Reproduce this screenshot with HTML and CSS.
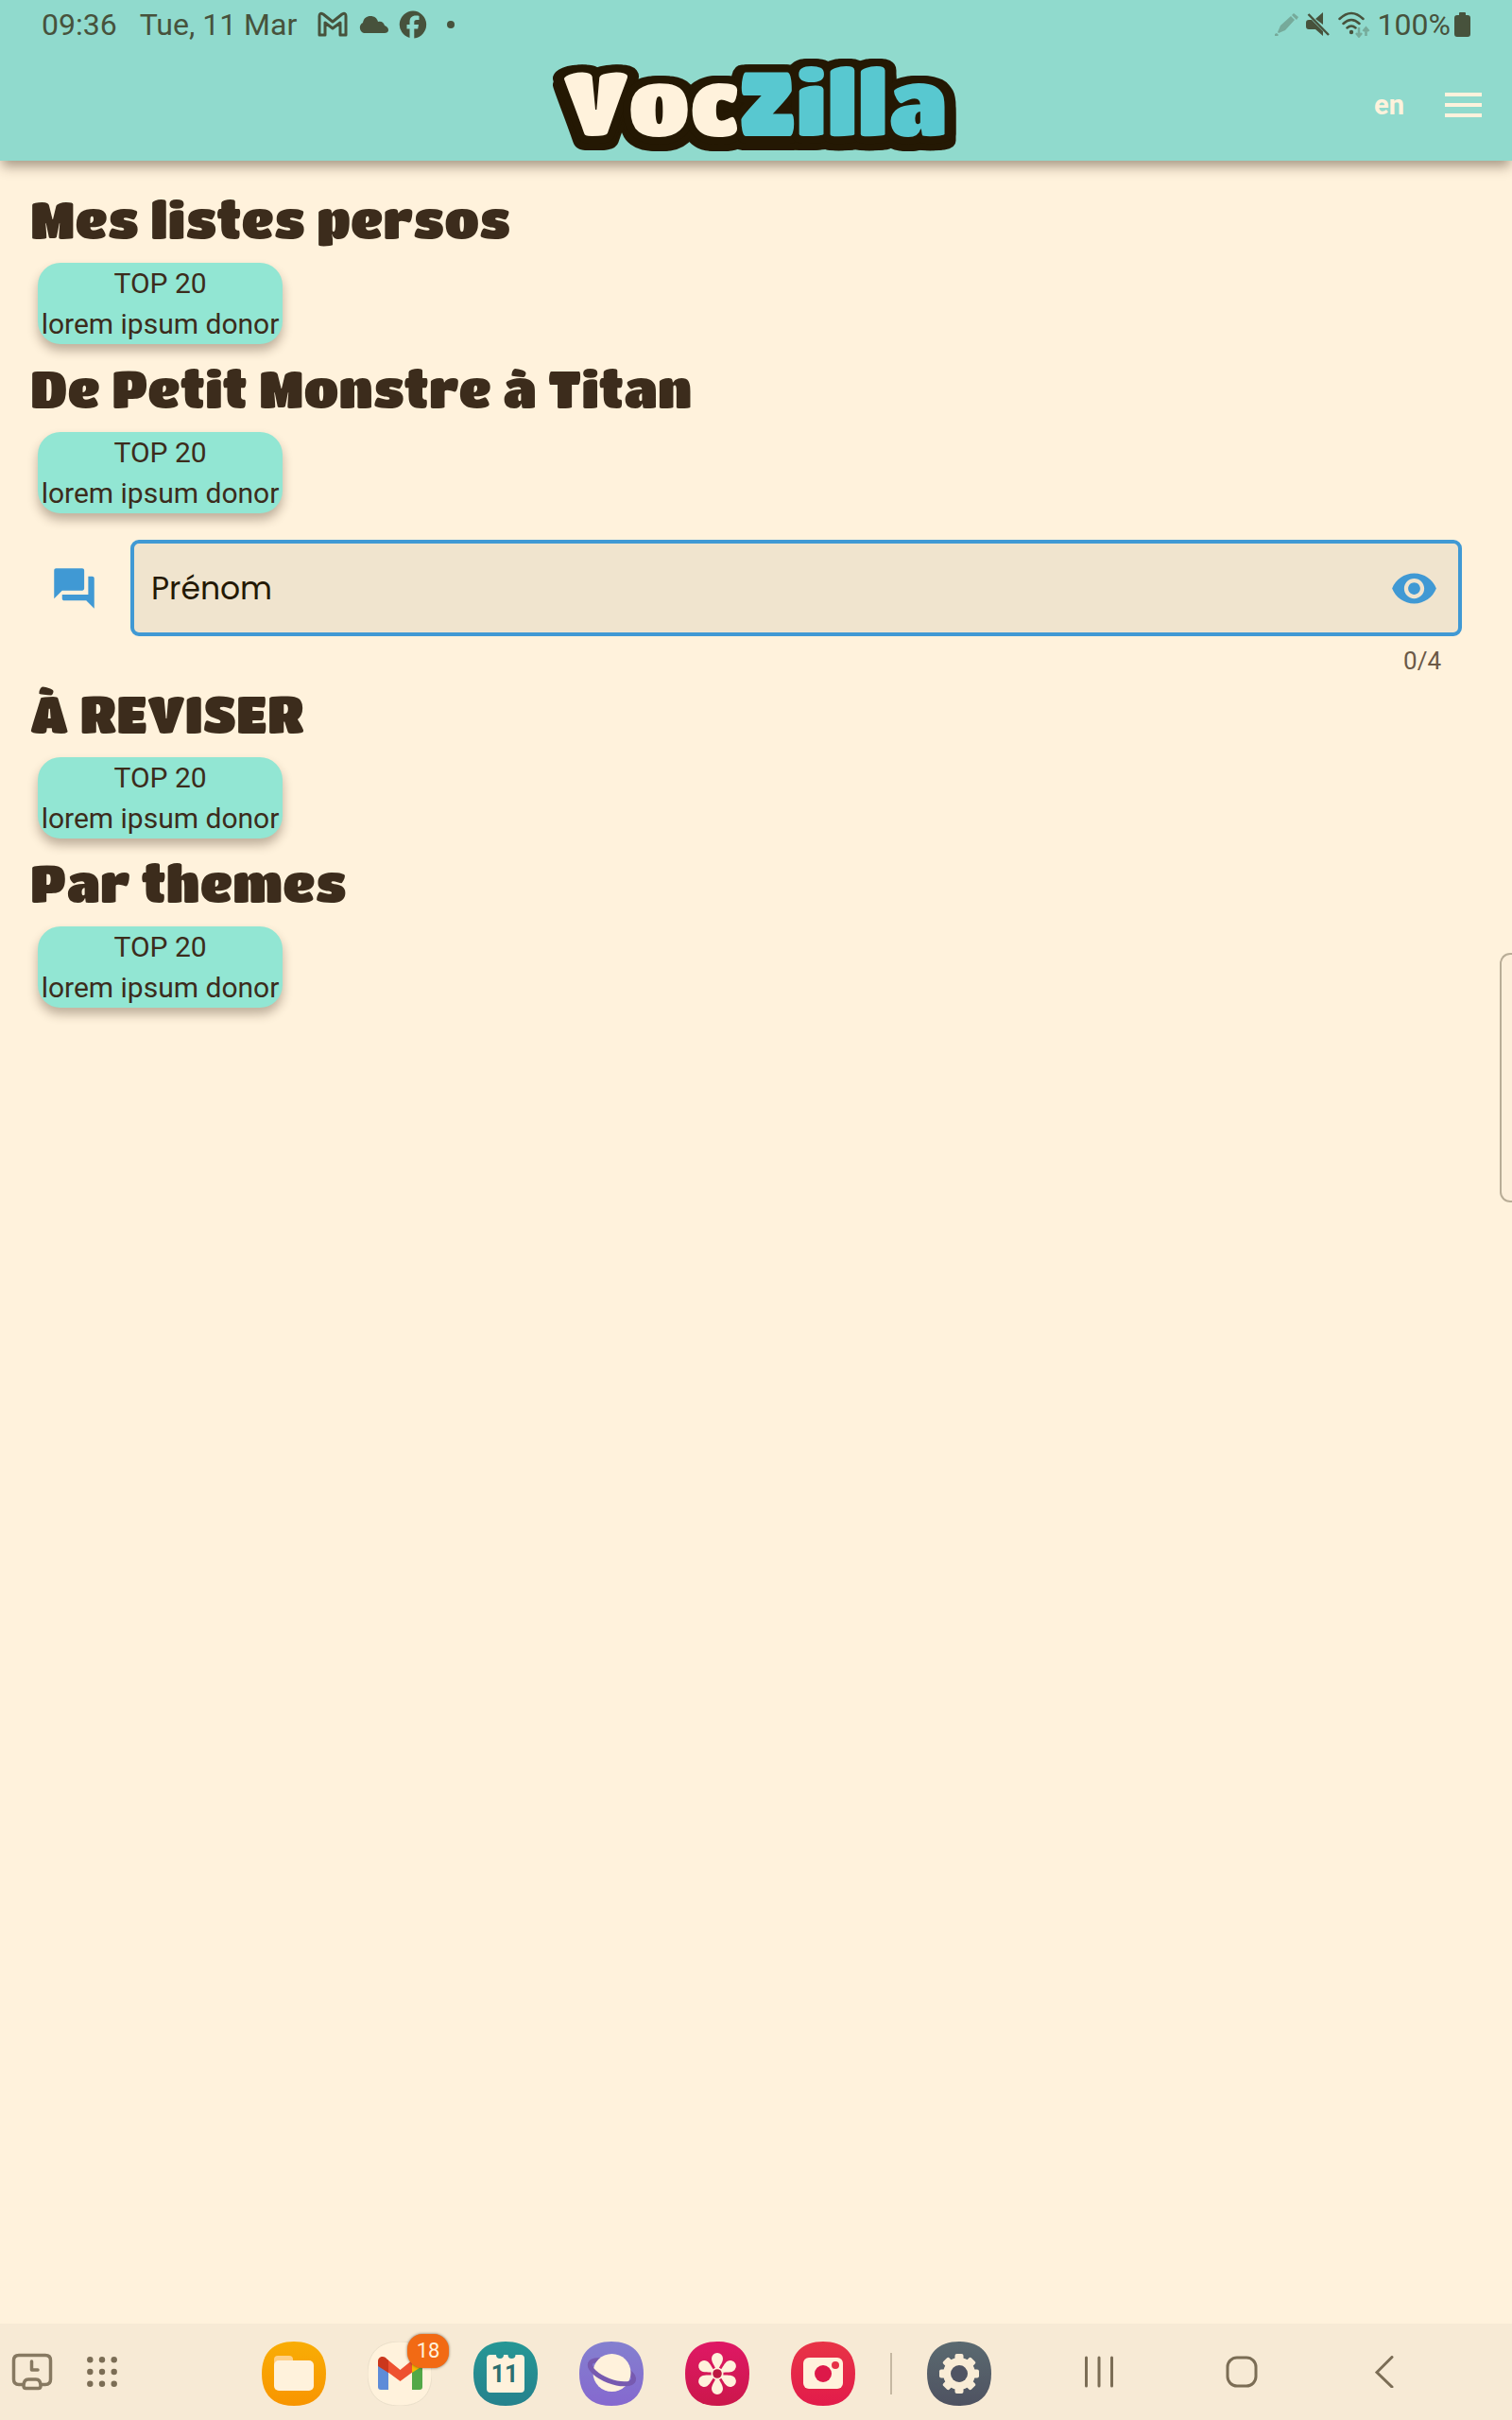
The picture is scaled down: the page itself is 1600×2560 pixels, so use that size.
FILE: index.html
```html
<!DOCTYPE html>
<html lang="fr">
<head>
<meta charset="utf-8">
<meta name="viewport" content="width=device-width, initial-scale=1">
<title>VocZilla</title>
<link rel="stylesheet" href="styles.css">
</head>
<body>
<header class="top">
  <div class="status">
    <span class="status-time">09:36</span>
    <span class="status-date">Tue, 11 Mar</span>
    <div class="status-notes">
      <svg width="32" height="28" viewBox="0 0 32 28" fill="none" stroke="currentColor" stroke-width="3" stroke-linejoin="round"><path d="M2 25V5Q2 1 6 3L16 11 26 3Q30 1 30 5V25H24V12L16 18 8 12V25Z"/></svg>
      <svg width="32" height="20" viewBox="0 0 32 20" fill="currentColor"><path d="M6 19a6 6 0 0 1-1-11C6 3 9 1 13 1c4 0 7 2 8 6 4-1 6 1 7 4 3 1 4 3 4 5s-2 3-4 3z"/></svg>
      <svg width="30" height="30" viewBox="0 0 30 30" fill="currentColor"><path d="M15 .5A14.5 14.5 0 0 0 11.500 29V19.500H8.500V15h3v-2.500C11.500 7.500 14 5.500 18 5.500c1.500 0 3 .2 3.500.4V10H19c-2 0-2.700.8-2.700 2.800V15H21l-.8 4.500h-3.900v9.900A14.500 14.500 0 0 0 15 .5Z"/></svg>
      <svg class="more-dot" width="8" height="8" viewBox="0 0 8 8" fill="currentColor"><circle cx="4" cy="4" r="4"/></svg>
    </div>
    <div class="status-system">
      <svg class="faded" width="26" height="26" viewBox="0 0 26 26" fill="currentColor"><path d="M1 25v-2l2-1 2 2-1 1zM4 21l3-7L18 4l4 4-10 11-7 3zM19 3l2-2 5 4-2 3z"/></svg>
      <svg width="26" height="26" viewBox="0 0 26 26" fill="currentColor"><path d="M0 11q0-3 3-3h3l12 12v5l-8-7H3q-3 0-3-3zM10 7l8-7v13z"/><path d="M2.500 2 24 24" fill="none" stroke="currentColor" stroke-width="2.500"/></svg>
      <svg width="34" height="28" viewBox="0 0 34 28"><g fill="none" stroke="currentColor" stroke-width="2.500" stroke-linecap="round"><path d="M1.500 8q12.500-12 25 0M5.500 13q8.500-8 17 0M9.500 17.500q4.500-4 9 0"/></g><circle cx="14" cy="22" r="2.200" fill="currentColor"/><path class="faded" d="M22 17v9m-3-3 3 3.500 3-3.500M29.500 26v-8m-3 3 3-3.500 3 3.500" fill="none" stroke="currentColor" stroke-width="2.500"/></svg>
      <span class="battery">100%<svg width="17" height="26" viewBox="0 0 17 26" fill="currentColor"><path d="M5 3V1q0-1 1-1h5q1 0 1 1v2h2q3 0 3 3v17q0 3-3 3H3q-3 0-3-3V6q0-3 3-3z"/></svg></span>
    </div>
  </div>
  <div class="appbar">
    <div class="appbar-side"></div>
    <svg class="logo" width="434" height="104" viewBox="0 0 434 104" role="img" aria-label="VocZilla">
      <defs><linearGradient id="logoFill" gradientUnits="userSpaceOnUse" x1="0" y1="0" x2="434" y2="0"><stop offset=".459" stop-color="#fff2dc"/><stop offset=".459" stop-color="#58c8d0"/></linearGradient></defs>
      <text x="13" y="85" fill="url(#logoFill)">VocZilla</text>
    </svg>
    <div class="appbar-side appbar-actions">
      <button class="lang" type="button">en</button>
      <button class="menu" type="button" aria-label="Menu"><svg width="39" height="26" viewBox="0 0 39 26" fill="currentColor"><path d="M0 0h39v4H0zM0 11h39v4H0zM0 22h39v4H0z"/></svg></button>
    </div>
  </div>
</header>

<main class="content">
  <section>
    <h2>Mes listes persos</h2>
    <button class="pill" type="button">TOP 20<br>lorem ipsum donor</button>
  </section>
  <section>
    <h2>De Petit Monstre à Titan</h2>
    <button class="pill" type="button">TOP 20<br>lorem ipsum donor</button>
  </section>
  <form class="field-row">
    <svg class="field-icon" width="51" height="51" viewBox="0 0 24 24" fill="currentColor"><path d="M21 6h-2v9H6v2c0 .55.45 1 1 1h11l4 4V7c0-.55-.45-1-1-1zm-4 6V3c0-.55-.45-1-1-1H3c-.55 0-1 .45-1 1v14l4-4h10c.55 0 1-.45 1-1z"/></svg>
    <div class="field">
      <div class="field-box">
        <input type="text" placeholder="Prénom" aria-label="Prénom" maxlength="4">
        <button type="button" aria-label="Afficher"><svg width="51" height="51" viewBox="0 0 24 24" fill="currentColor"><path d="M12 4.500C7 4.500 2.730 7.610 1 12c1.730 4.390 6 7.500 11 7.500s9.270-3.110 11-7.500c-1.730-4.390-6-7.500-11-7.500zM12 17c-2.760 0-5-2.240-5-5s2.240-5 5-5 5 2.240 5 5-2.240 5-5 5zm0-8c-1.660 0-3 1.340-3 3s1.340 3 3 3 3-1.340 3-3-1.340-3-3-3z"/></svg></button>
      </div>
      <div class="counter">0/4</div>
    </div>
  </form>
  <section>
    <h2>À REVISER</h2>
    <button class="pill" type="button">TOP 20<br>lorem ipsum donor</button>
  </section>
  <section>
    <h2>Par themes</h2>
    <button class="pill" type="button">TOP 20<br>lorem ipsum donor</button>
  </section>
</main>

<div class="edge-handle"></div>

<nav class="dock">
  <svg width="0" height="0" class="defs"><defs>
    <path id="tile" d="M34 0C56 0 68 12 68 34S56 68 34 68 0 56 0 34 12 0 34 0Z"/>
    <linearGradient id="gFiles" x2="0" y2="1"><stop stop-color="#f9ad05"/><stop offset="1" stop-color="#f89500"/></linearGradient>
    <linearGradient id="gCal" x2="0" y2="1"><stop stop-color="#269795"/><stop offset="1" stop-color="#25828d"/></linearGradient>
    <linearGradient id="gWeb" x2="0" y2="1"><stop stop-color="#8480cf"/><stop offset="1" stop-color="#8568cf"/></linearGradient>
    <linearGradient id="gPhotos" x2="0" y2="1"><stop stop-color="#df1865"/><stop offset="1" stop-color="#cb174b"/></linearGradient>
    <linearGradient id="gCam" x2="0" y2="1"><stop stop-color="#e83446"/><stop offset="1" stop-color="#e21b4b"/></linearGradient>
    <linearGradient id="gSet" x2="0" y2="1"><stop stop-color="#5b6a70"/><stop offset="1" stop-color="#4e5261"/></linearGradient>
  </defs></svg>
  <div class="dock-left">
    <button type="button" aria-label="Recent activity"><svg class="soft" width="44" height="40" viewBox="0 0 44 40" fill="none" stroke="currentColor" stroke-width="3.500" stroke-linecap="round" stroke-linejoin="round"><path d="M13 33.500H8q-5.500 0-5.500-5.500V8q0-5.500 5.500-5.500h28q5.500 0 5.500 5.500v20q0 5.500-5.500 5.500h-5M13 35q0-7 5-7h8q5 0 5 7 0 2.500-2.500 2.500h-13q-2.500 0-2.500-2.500Z"/><path d="M21.500 9v9H28"/></svg></button>
    <button type="button" aria-label="All apps"><svg width="32" height="32" viewBox="0 0 32 32" fill="currentColor"><circle cx="3.300" cy="3.300" r="3.200"/><circle cx="16" cy="3.300" r="3.200"/><circle cx="28.700" cy="3.300" r="3.200"/><circle cx="3.300" cy="16" r="3.200"/><circle cx="16" cy="16" r="3.200"/><circle cx="28.700" cy="16" r="3.200"/><circle cx="3.300" cy="28.700" r="3.200"/><circle cx="16" cy="28.700" r="3.200"/><circle cx="28.700" cy="28.700" r="3.200"/></svg></button>
  </div>
  <div class="dock-apps">
    <button type="button" aria-label="My Files"><svg width="68" height="68" viewBox="0 0 68 68"><use href="#tile" fill="url(#gFiles)"/><path d="M13 30V19q0-4 4-4h12q4 0 4 4v6z" fill="#ffd086"/><rect x="13" y="20" width="42" height="32" rx="5" fill="#fff2dc"/></svg></button>
    <button class="badged" type="button" aria-label="Gmail"><svg width="68" height="68" viewBox="0 0 68 68"><use href="#tile" fill="#fff2dc" stroke="#eadfca" stroke-width="1"/><path d="M11 25v23q0 3 3 3h8V31z" fill="#5e8cd8"/><path d="M58 25v23q0 3-3 3h-8V31z" fill="#53a848"/><path d="M21 19l13.500 11L48 19v13L34.500 42 21 32z" fill="#ee5130"/><path d="M11 21c0-5 5-6 8-4l3 3v13L11 26z" fill="#cb371c"/><path d="M58 21c0-5-5-6-8-4l-3 3v13l11-7z" fill="#f8b800"/></svg><span class="badge">18</span></button>
    <button type="button" aria-label="Calendar"><svg width="68" height="68" viewBox="0 0 68 68"><use href="#tile" fill="url(#gCal)"/><path d="M18 14h6a4 4 0 0 0 8 0h4.500a4 4 0 0 0 8 0H50q4 0 4 4v32q0 4-4 4H18q-4 0-4-4V18q0-4 4-4Z" fill="#fff2dc"/><text class="cal-day" x="33" y="43" text-anchor="middle">11</text></svg></button>
    <button type="button" aria-label="Internet"><svg width="68" height="68" viewBox="0 0 68 68"><use href="#tile" fill="url(#gWeb)"/><g transform="rotate(21 34.500 32)" fill="none" stroke="#775ab0" stroke-width="5"><ellipse cx="34.500" cy="32" rx="24.500" ry="9"/></g><circle cx="34.500" cy="33" r="20" fill="#fff2dc"/><path transform="rotate(21 34.500 32)" d="M10 32A24.500 10 0 0 0 59 32" fill="none" stroke="#775ab0" stroke-width="5"/></svg></button>
    <button type="button" aria-label="Gallery"><svg width="68" height="68" viewBox="0 0 68 68"><defs><path id="petal" d="M34 34C33 27 28 23 28 18a6 6 0 0 1 12 0C40 23 35 27 34 34Z"/></defs><use href="#tile" fill="url(#gPhotos)"/><g fill="#fff2dc"><use href="#petal"/><use href="#petal" transform="rotate(60 34 34)"/><use href="#petal" transform="rotate(120 34 34)"/><use href="#petal" transform="rotate(180 34 34)"/><use href="#petal" transform="rotate(240 34 34)"/><use href="#petal" transform="rotate(300 34 34)"/><circle cx="34" cy="34" r="6.500"/></g><circle cx="34" cy="34" r="4.800" fill="#bd1940"/></svg></button>
    <button type="button" aria-label="Camera"><svg width="68" height="68" viewBox="0 0 68 68"><use href="#tile" fill="url(#gCam)"/><rect x="13" y="17" width="42" height="33" rx="6" fill="#fff2dc"/><circle cx="34" cy="34" r="9" fill="#dd1849"/><circle cx="47" cy="25" r="4" fill="#e63145"/></svg></button>
    <span class="dock-rule"></span>
    <button type="button" aria-label="Settings"><svg width="68" height="68" viewBox="0 0 68 68"><defs><rect id="tooth" x="29.500" y="13" width="9" height="42" rx="2"/></defs><use href="#tile" fill="url(#gSet)"/><g fill="#f9ecd6"><circle cx="34" cy="34" r="17"/><use href="#tooth"/><use href="#tooth" transform="rotate(45 34 34)"/><use href="#tooth" transform="rotate(90 34 34)"/><use href="#tooth" transform="rotate(135 34 34)"/></g><circle cx="34" cy="34" r="9" fill="#505463"/></svg></button>
  </div>
  <div class="dock-nav">
    <button type="button" aria-label="Recents"><svg width="32" height="34" viewBox="0 0 32 34" fill="none" stroke="currentColor" stroke-width="3" stroke-linecap="round"><path d="M2.500 2v30M16 2v30M29.500 2v30"/></svg></button>
    <button type="button" aria-label="Home"><svg width="34" height="34" viewBox="0 0 34 34" fill="none" stroke="currentColor" stroke-width="3"><rect x="2" y="2" width="30" height="30" rx="10"/></svg></button>
    <button type="button" aria-label="Back"><svg width="20" height="34" viewBox="0 0 20 34" fill="none" stroke="currentColor" stroke-width="3" stroke-linecap="round"><path d="M18 1.500 2 17.500 18 33"/></svg></button>
  </div>
</nav>
</body>
</html>
```
FILE: styles.css
```css
* { box-sizing: border-box; }

body {
  margin: 0;
  min-height: 100vh;
  display: flex;
  flex-direction: column;
  position: relative;
  background: #fff2dc;
  color: #3c2c1c;
  font-family: Roboto, sans-serif;
}

button {
  margin: 0;
  padding: 0;
  border: 0;
  background: none;
  color: inherit;
  font: inherit;
}

svg { display: block; flex: none; }

/* Header */
.top {
  background: #90dacd;
  box-shadow: 0 8px 12px -2px rgba(60, 44, 28, .45);
}

.status {
  display: flex;
  align-items: center;
  height: 52px;
  padding: 0 44px;
  color: #47523c;
  font-size: 32px;
  line-height: 52px;
}

.status-date { margin-left: 24px; }

.status-notes {
  display: flex;
  align-items: center;
  gap: 11px;
  margin-left: 22px;
}

.more-dot { margin-left: 10px; }

.status-system {
  display: flex;
  align-items: center;
  gap: 8px;
  margin-left: auto;
}

.battery {
  display: flex;
  align-items: center;
  gap: 4px;
}

.faded { opacity: .35; }

.appbar {
  display: flex;
  align-items: center;
  height: 118px;
  padding: 0 32px;
}

.appbar-side { flex: 1; }

.appbar-actions {
  display: flex;
  align-items: center;
  justify-content: flex-end;
  gap: 43px;
  color: #fff2dc;
}

.lang {
  font-size: 29px;
  font-weight: 700;
}

.logo { overflow: visible; }

.logo text {
  font-family: "Titan One", Inter, sans-serif;
  font-size: 95px;
  stroke: #241803;
  stroke-width: 16px;
  stroke-linejoin: round;
  paint-order: stroke;
  filter: drop-shadow(0 7px 0 #241803) drop-shadow(4px 0 0 #241803) drop-shadow(-4px 0 0 #241803);
}

/* Lists */
.content {
  flex: 1;
  padding: 33px 32px;
}

section + section { margin-top: 18px; }

h2 {
  margin: 0;
  padding-bottom: 17px;
  font-family: "Titan One", Inter, sans-serif;
  font-weight: 400;
  font-size: 54px;
  line-height: 58px;
}

.pill {
  display: block;
  width: 259px;
  height: 86px;
  margin-left: 8px;
  border-radius: 24px;
  background: #92e6d3;
  box-shadow: 0 7px 11px rgba(60, 44, 28, .33);
  font-size: 30px;
  line-height: 43px;
  text-align: center;
  white-space: nowrap;
}

/* Text field */
.field-row {
  display: flex;
  align-items: flex-start;
  gap: 34px;
  margin: 28px 21px 0;
}

.field-icon {
  margin-top: 26px;
  color: #4099d4;
}

.field { flex: 1; }

.field-box {
  display: flex;
  align-items: center;
  height: 102px;
  padding: 0 21px 0 18px;
  border: 4px solid #4099d4;
  border-radius: 9px;
  background: #f0e4ce;
  color: #4099d4;
}

.field-box input {
  flex: 1;
  min-width: 0;
  padding: 2px 0 0;
  border: 0;
  outline: 0;
  background: none;
  font-family: Poppins, Inter, sans-serif;
  font-size: 33px;
}

.field-box input::placeholder {
  color: #241803;
  opacity: 1;
}

.counter {
  padding-right: 22px;
  color: #6b5947;
  font-size: 26px;
  line-height: 53px;
  text-align: right;
}

.edge-handle {
  position: absolute;
  top: 1008px;
  right: 0;
  width: 13px;
  height: 264px;
  border: 2px solid #b9ad97;
  border-right: 0;
  border-radius: 11px 0 0 11px;
  background: #fdefda;
}

/* Dock */
.dock {
  display: flex;
  align-items: center;
  height: 102px;
  padding: 0 60px 0 12px;
  background: #f7ead5;
  color: #7b6d55;
}

.defs { position: absolute; }

.dock-left,
.dock-apps,
.dock-nav {
  display: flex;
  align-items: center;
}

.dock-left {
  gap: 36px;
  width: 265px;
}

.soft { opacity: .9; }

.dock-apps {
  gap: 44px;
  padding-top: 4px;
}

.dock-rule {
  width: 2px;
  height: 44px;
  margin: 0 -7px;
  background: #c5b8a2;
}

.badged { position: relative; }

.badge {
  position: absolute;
  top: -8px;
  right: -18px;
  width: 44px;
  height: 36px;
  border-radius: 16px;
  background: #f26a14;
  box-shadow: 0 0 3px rgba(60, 44, 28, .7);
  color: #fff2dc;
  font-size: 22px;
  line-height: 36px;
  text-align: center;
}

.cal-day {
  fill: #2b6f70;
  font-size: 25px;
  font-weight: 700;
}

.dock-nav { margin-left: auto; }

.dock-nav button {
  display: flex;
  justify-content: center;
  width: 151px;
}
```
